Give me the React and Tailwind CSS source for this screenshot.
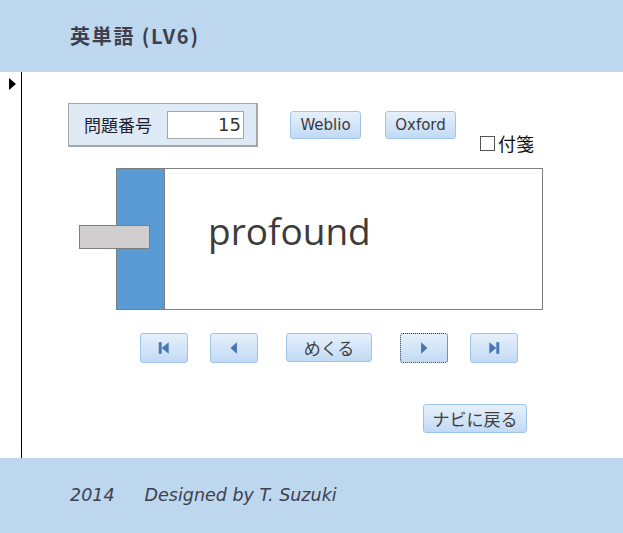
const jp = { fontFamily: '"Noto Sans CJK JP", "Noto Sans", sans-serif' };
const verdana = { fontFamily: '"DejaVu Sans", "Noto Sans CJK JP", sans-serif' };

function Btn({ className = "", children, focus }) {
  return (
    <div
      className={`flex items-center justify-center rounded-[3px] bg-gradient-to-b from-[#e6f0fb] to-[#c2daf5] text-[#404040] ${
        focus ? "border border-dotted border-[#3a3a4a]" : "border border-[#9fc4ea]"
      } ${className}`}
    >
      {children}
    </div>
  );
}

function NavIcon({ type }) {
  const c = "#4677b0";
  return (
    <svg width="14" height="14" viewBox="0 0 12 12">
      {type === "first" && (
        <>
          <rect x="1.5" y="1" width="2.5" height="10" fill={c} />
          <polygon points="10,1 10,11 4,6" fill={c} />
        </>
      )}
      {type === "prev" && <polygon points="8.5,1 8.5,11 3,6" fill={c} />}
      {type === "next" && <polygon points="3.5,1 3.5,11 9,6" fill={c} />}
      {type === "last" && (
        <>
          <polygon points="2,1 2,11 8,6" fill={c} />
          <rect x="8" y="1" width="2.5" height="10" fill={c} />
        </>
      )}
    </svg>
  );
}

export default function App() {
  return (
    <div className="w-[623px] h-[533px] flex flex-col bg-white overflow-hidden">
      <header className="h-[72px] bg-[#bdd7ee] flex items-center pl-[70px]">
        <h1 className="text-[20px] font-bold text-[#3d3f4c] tracking-[1.8px]" style={jp}>
          英単語 (LV6)
        </h1>
      </header>

      <div className="flex h-[386px]">
        <div className="w-[22px] border-r border-black pt-[6px] pl-[9px]">
          <svg width="8" height="12" viewBox="0 0 8 12">
            <polygon points="0,0 0,12 7,6" fill="#000" />
          </svg>
        </div>

        <div className="flex-1 flex flex-col pl-[46px] pt-[31px]">
          <div className="flex items-start h-[44px]">
            <div className="w-[190px] h-[44px] bg-[#deeaf6] border border-[#a6a6a6] border-b-2 border-r-2 flex items-center pl-[15px]">
              <span className="text-[17px] text-[#1f1f2f]" style={jp}>問題番号</span>
              <div className="ml-[15px] w-[77px] h-[28px] bg-white border border-[#a6a6a6] flex items-center justify-end pr-[2px] text-[18px] text-[#333]" style={verdana}>
                15
              </div>
            </div>
            <Btn className="ml-[32px] mt-[8px] w-[71px] h-[28px] text-[15px]">
              <span style={verdana} className="text-[#3a3a3a]">Weblio</span>
            </Btn>
            <Btn className="ml-[24px] mt-[8px] w-[71px] h-[28px] text-[15px]">
              <span style={verdana} className="text-[#3a3a3a]">Oxford</span>
            </Btn>
            <div className="ml-[24px] mt-[30px] flex items-center">
              <div className="w-[15px] h-[15px] border border-[#555] bg-white" />
              <span className="ml-[3px] text-[18px] leading-[20px] text-[#111]" style={jp}>付箋</span>
            </div>
          </div>

          <div className="relative ml-[48px] mt-[21px] w-[427px] h-[142px] border border-[#7f7f7f] flex">
            <div className="w-[48px] h-full bg-[#5b9bd5] border-r border-[#7f7f7f]" />
            <div className="flex-1 flex items-center pl-[43px] pb-[16px]">
              <span className="text-[37px] text-[#3b3b3b]" style={{ fontFamily: '"Open Sans", "Noto Sans", sans-serif' }}>
                profound
              </span>
            </div>
            <div className="absolute left-[-38px] top-[56px] w-[71px] h-[24px] bg-[#d0cece] border border-[#7f7f7f]" />
          </div>

          <div className="flex items-start ml-[72px] mt-[23px] h-[30px]">
            <Btn className="w-[48px] h-[30px]"><NavIcon type="first" /></Btn>
            <Btn className="ml-[22px] w-[48px] h-[30px]"><NavIcon type="prev" /></Btn>
            <Btn className="ml-[28px] w-[86px] h-[29px] text-[17px]">
              <span style={jp}>めくる</span>
            </Btn>
            <Btn focus className="ml-[28px] w-[48px] h-[30px]"><NavIcon type="next" /></Btn>
            <Btn className="ml-[22px] w-[48px] h-[30px]"><NavIcon type="last" /></Btn>
          </div>

          <div className="flex ml-[355px] mt-[41px]">
            <Btn className="w-[104px] h-[29px] text-[17px]">
              <span style={jp}>ナビに戻る</span>
            </Btn>
          </div>
        </div>
      </div>

      <footer className="h-[75px] bg-[#bdd7ee] flex items-center pl-[70px] text-[17.5px] italic text-[#404050]" style={verdana}>
        <span>2014</span>
        <span className="ml-[30px]">Designed by T. Suzuki</span>
      </footer>
    </div>
  );
}
